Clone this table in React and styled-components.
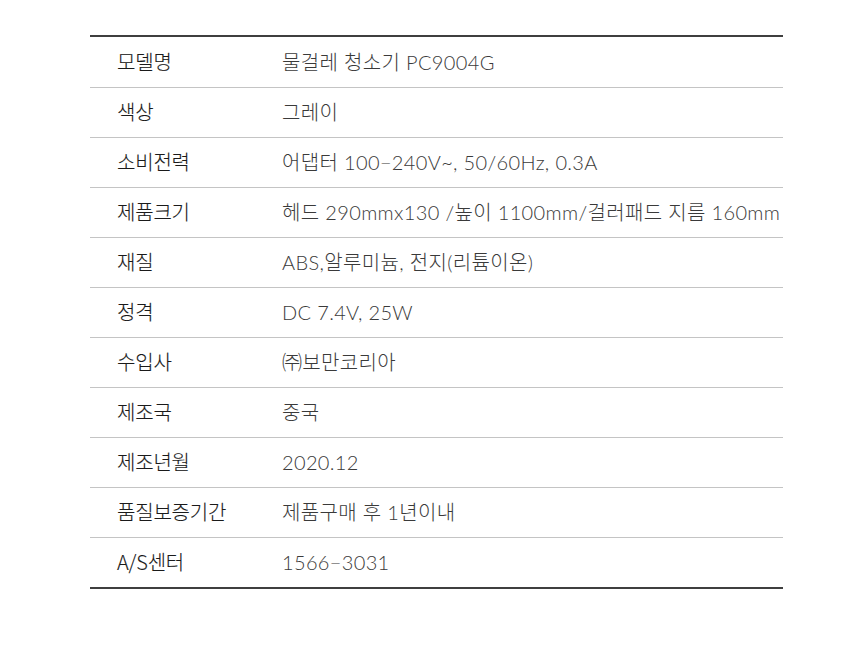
import React from "react";
import styled, { createGlobalStyle } from "styled-components";

const GlobalStyle = createGlobalStyle`
  body {
    margin: 0;
    background: #ffffff;
    font-family: "Noto Sans CJK KR", "Noto Sans", sans-serif;
  }
`;

const Page = styled.div`
  width: 860px;
  height: 671px;
  padding-top: 35px;
  box-sizing: border-box;
`;

const Table = styled.div`
  width: 693px;
  margin-left: 90px;
  border-top: 2px solid #3f3f3f;
  border-bottom: 2px solid #3f3f3f;
`;

const Row = styled.div`
  display: grid;
  grid-template-columns: 192px 1fr;
  align-items: center;
  height: 50px;
  box-sizing: border-box;
  border-top: ${(p) => (p.$first ? "none" : "1px solid #c4c4c4")};
`;

const Label = styled.div`
  padding-left: 27px;
  font-size: 20px;
  font-weight: 300;
  color: #1a1a1a;
  letter-spacing: -0.2px;
  white-space: nowrap;
  margin-top: -2px;
  -webkit-text-stroke: 0.12px #1a1a1a;
`;

const Value = styled.div`
  font-family: "Lato", "Noto Sans CJK KR", sans-serif;
  font-size: 20px;
  font-weight: 300;
  color: #3a3a3a;
  letter-spacing: 0.35px;
  white-space: nowrap;
  margin-top: -2px;
`;

const rows = [
  ["모델명", "물걸레 청소기 PC9004G"],
  ["색상", "그레이"],
  ["소비전력", "어댑터 100−240V~, 50/60Hz, 0.3A"],
  ["제품크기", "헤드 290mmx130 /높이 1100mm/걸러패드 지름 160mm"],
  ["재질", "ABS,알루미늄, 전지(리튬이온)"],
  ["정격", "DC 7.4V, 25W"],
  ["수입사", "㈜보만코리아"],
  ["제조국", "중국"],
  ["제조년월", "2020.12"],
  ["품질보증기간", "제품구매 후 1년이내"],
  ["A/S센터", "1566−3031"],
];

export default function App() {
  return (
    <>
      <GlobalStyle />
      <Page>
        <Table>
          {rows.map(([label, value], i) => (
            <Row key={label} $first={i === 0}>
              <Label>{label}</Label>
              <Value>{value}</Value>
            </Row>
          ))}
        </Table>
      </Page>
    </>
  );
}
